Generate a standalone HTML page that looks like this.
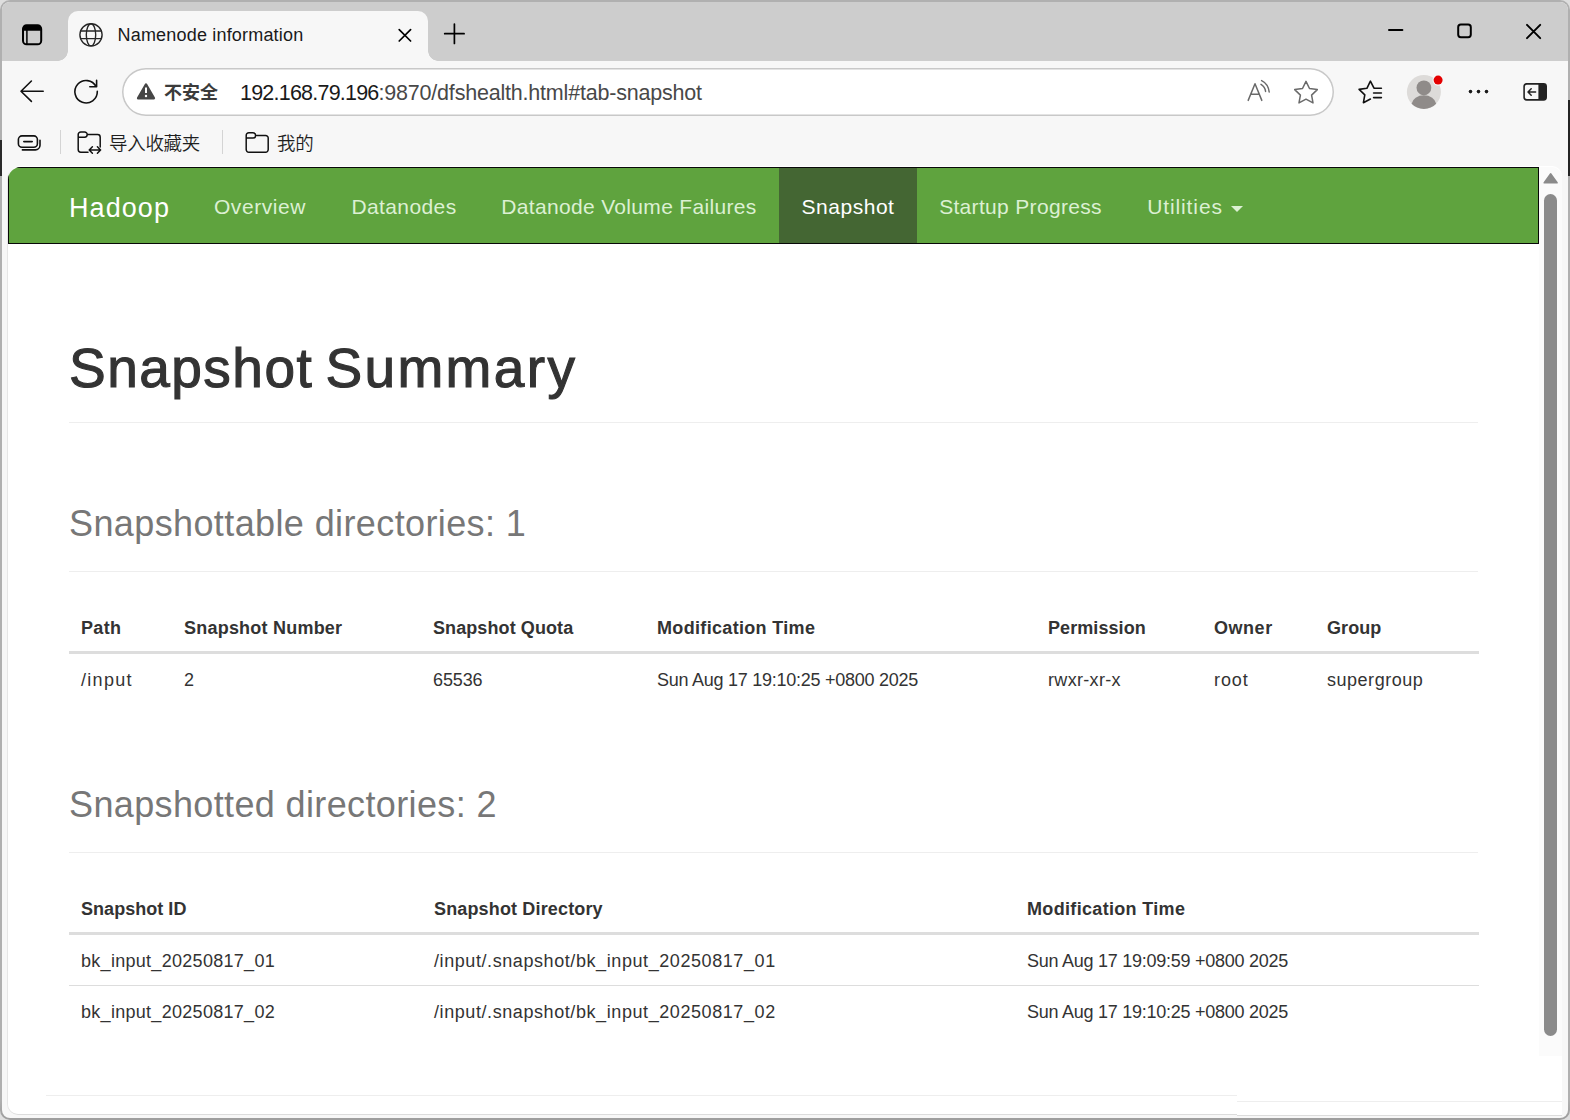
<!DOCTYPE html>
<html lang="zh-CN">
<head>
<meta charset="utf-8">
<title>Namenode information</title>
<style>
*{box-sizing:border-box;margin:0;padding:0}
html,body{width:1570px;height:1120px;overflow:hidden}
body{position:relative;background:#dedede;font-family:"Liberation Sans","Noto Sans CJK SC",sans-serif;color:#1a1a1a}
svg{position:absolute;overflow:visible;display:block}
.abs{position:absolute}

/* ---------- browser window frame ---------- */
#frame{position:absolute;left:0;top:0;width:1570px;height:1120px;border-radius:10px;background:linear-gradient(#b0b0b0,#b0b0b0 1100px,#9e9e9e 1118px)}
#window{position:absolute;left:2px;top:2px;width:1566px;height:1116px;background:#f7f7f7;border-radius:8px;overflow:hidden}
#tabstrip{position:absolute;left:0;top:0;width:1566px;height:59px;background:#cdcdcd}
#tab{position:absolute;left:66px;top:9px;width:360px;height:50px;background:#f7f7f7;border-radius:10px 10px 0 0}
#tab:before,#tab:after{content:"";position:absolute;bottom:0;width:10px;height:10px;background:radial-gradient(circle at 0 0,rgba(247,247,247,0) 9.5px,#f7f7f7 10px)}
#tab:before{left:-10px}
#tab:after{right:-10px;transform:scaleX(-1)}
#tabtitle{position:absolute;left:49.5px;top:13px;font-size:18px;line-height:22px;white-space:nowrap;color:#1a1a1a;letter-spacing:.19px}

/* ---------- toolbar ---------- */
#omnibox{position:absolute;left:120px;top:66px;width:1212px;height:48px;border-radius:24px;background:#fff;box-shadow:inset 0 0 0 1.5px #c8c8c8}
#sec{position:absolute;left:162px;top:78.5px;font-size:18px;line-height:24px;font-weight:700;color:#3b3b3b;white-space:nowrap;font-family:"Liberation Sans","Noto Sans CJK SC",sans-serif}
#url{position:absolute;left:238px;top:77.5px;font-size:21.5px;line-height:26px;white-space:nowrap;color:#484848;letter-spacing:-.2px}
#url b{font-weight:400;color:#1a1a1a;letter-spacing:-.78px}

/* ---------- bookmarks bar ---------- */
.bm{position:absolute;top:129.5px;font-size:18.5px;line-height:24px;white-space:nowrap;color:#1f1f1f;font-weight:350;letter-spacing:-.3px}
.bmsep{position:absolute;top:128px;width:1px;height:24px;background:#d4d4d4}

/* ---------- page ---------- */
#page{position:absolute;left:6px;top:165px;width:1554px;height:947px;background:#fff;border-radius:13px 10px 0 10px;overflow:hidden;box-shadow:0 -1px 0 #fff,-1px 0 0 #e6e6e6,0 1px 0 #dcdcdc}
#view{position:absolute;left:0;top:0;width:1531px;height:947px;overflow:hidden;color:#333;font-size:21px;line-height:30px}
#scroll{position:absolute;left:1531px;top:0;width:23px;height:889px;background:#fbfbfb}
#thumb{position:absolute;left:5px;top:27px;width:13px;height:842px;border-radius:6.5px;background:#8b8b8b}

header.navbar{position:absolute;left:0;top:0;width:1531px;height:77px;background:#5fa33e;border:1px solid #080808}
.brand{position:absolute;left:60px;top:23px;font-size:27px;line-height:30px;color:#fff;white-space:nowrap}
ul.nav{list-style:none;position:absolute;left:182px;top:-1px;height:77px;display:flex}
ul.nav li{height:77px;padding:23.5px 0 0;text-align:center;color:#dcf0d3;white-space:nowrap;font-size:21px;line-height:30px}
ul.nav li.active{background:#446633;color:#fff;border-top:1px solid #080808;border-bottom:1px solid #080808;padding-top:22.5px}
.caret{display:inline-block;width:0;height:0;margin-left:8px;vertical-align:middle;border-top:6px solid #dcf0d3;border-left:6px solid transparent;border-right:6px solid transparent;position:relative;top:2px}
.t{position:relative;top:.09em}

.container{position:absolute;left:38px;top:168px;width:1455px;padding:0 23px}
.page-header{border-bottom:1px solid #eee;height:88px}
h1{font-size:55px;line-height:59px;font-weight:400;color:#333;white-space:nowrap;height:59px}
h1.main .t{-webkit-text-stroke:1.1px #333;top:3.5px;word-spacing:-3.1px}
h1 small.t{font-size:36px;font-weight:400;color:#777;line-height:1;top:4px}
table{border-collapse:separate;border-spacing:0;table-layout:fixed;width:1410px;font-size:18px;line-height:26px}
th,td{text-align:left;padding:0 0 0 12px;white-space:nowrap;overflow:visible;vertical-align:top}
th{font-weight:700;height:52px;border-bottom:3px solid #ddd;padding-top:12px}
td{height:50px;padding-top:12px}
tr+tr td{border-top:1px solid #ddd;height:51px}
th .t,td .t{top:1px}
hr.foot{position:absolute;border:0;height:1px;background:#eee}
#overlay{position:absolute;left:1235px;top:1054px;width:325px;height:60px;background:#fff;border-bottom:1px solid #dcdcdc}
</style>
</head>
<body>
<div id="frame"></div>
<div class="abs" style="left:0;top:140px;width:2px;height:36px;background:#2a2a2a"></div>
<div class="abs" style="left:1568px;top:100px;width:2px;height:76px;background:#242424"></div>
<div id="window">
  <div id="tabstrip">
    <div id="tab">
      <div id="tabtitle">Namenode information</div>
    </div>
  </div>
  <div id="omnibox"></div>
  <svg id="chrome-icons" style="left:-2px;top:-2px" width="1570" height="170" viewBox="0 0 1570 170" fill="none" stroke="#111" stroke-width="1.6" stroke-linecap="round" stroke-linejoin="round">
    <!-- tab actions -->
    <g stroke-width="2" stroke="#000">
      <rect x="23" y="25.3" width="18.2" height="19" rx="3.6"/>
      <path d="M23.4 28.2h17.4" stroke-width="5" stroke-linecap="butt"/>
      <path d="M26.9 30v14" stroke-width="1.5" stroke-linecap="butt"/>
    </g>
    <!-- globe favicon -->
    <g stroke-width="1.4" stroke="#262626">
      <circle cx="91" cy="34.8" r="11.1"/>
      <ellipse cx="91" cy="34.8" rx="4.7" ry="11.1"/>
      <path d="M80.6 31h20.8M80.6 38.6h20.8"/>
    </g>
    <!-- tab close / new tab -->
    <path d="M399.2 29.6l11.4 11.4M410.6 29.6l-11.4 11.4" stroke="#000" stroke-width="1.7"/>
    <path d="M444.7 33.7h19.4M454.4 24v19.4" stroke="#000" stroke-width="1.7"/>
    <!-- window controls -->
    <g stroke="#000" stroke-width="2">
      <path d="M1389 30h13.4"/>
      <rect x="1458.2" y="24.6" width="12.6" height="12.6" rx="2.6"/>
      <path d="M1527 24.9l13.2 13.2M1540.2 24.9L1527 38.1"/>
    </g>
    <!-- back -->
    <path d="M43.2 91.2H21.2M31.4 81L21 91.2l10.4 10.2"/>
    <!-- refresh -->
    <path d="M97.3 91.4A11.2 11.2 0 1 1 96.1 86.7M96.6 80.4V86.8H89.8"/>
    <!-- warning -->
    <path d="M146 84.6l7.8 13.6h-15.6z" fill="#464646" stroke="#464646" stroke-width="2.6"/>
    <path d="M146 87.4v5.6" stroke="#fff" stroke-width="2" stroke-linecap="butt"/>
    <circle cx="146" cy="96" r="1.2" fill="#fff" stroke="none"/>
    <!-- read aloud -->
    <g stroke="#6a6a6a" stroke-width="1.5">
      <path d="M1248.2 100.4l6.8-16.6 6.8 16.6M1250.8 94.2h8.6"/>
      <path d="M1261 84.4c2.6 1.6 4.2 4 4.6 7M1261.6 80.6c4.4 2.2 7 6.2 7.6 11.4"/>
    </g>
    <!-- star -->
    <path d="M1306 81.4l3.5 7.1 7.8 1.1-5.7 5.5 1.4 7.8-7-3.7-7 3.7 1.4-7.8-5.7-5.5 7.8-1.1z" stroke="#6a6a6a" stroke-width="1.5"/>
    <!-- favorites -->
    <path d="M1381.4 88.2h-7.4l-3.6-7-3.5 7.1-7.8 1.1 5.7 5.5-1.4 7.8 7-3.7M1373.6 93h7.8M1373.6 97.6h7.8"/>
    <!-- profile -->
    <circle cx="1423.9" cy="92" r="17" fill="#dddbd9" stroke="none"/>
    <circle cx="1423.9" cy="87.8" r="7.4" fill="#8f8b89" stroke="none"/>
    <path d="M1411.6 103.7a12.4 9.6 0 0 1 24.6 0a17 17 0 0 1-24.6 0z" fill="#8f8b89" stroke="none"/>
    <circle cx="1438.1" cy="80.1" r="5.6" fill="#f7f7f7" stroke="none"/>
    <circle cx="1438.1" cy="80.1" r="4.5" fill="#e40000" stroke="none"/>
    <!-- more -->
    <g fill="#1a1a1a" stroke="none"><circle cx="1470.5" cy="91.6" r="1.8"/><circle cx="1478.5" cy="91.6" r="1.8"/><circle cx="1486.5" cy="91.6" r="1.8"/></g>
    <!-- sidebar -->
    <path d="M1538.4 83.9h5.2a2.6 2.6 0 0 1 2.6 2.6v10.8a2.6 2.6 0 0 1-2.6 2.6h-5.2z" fill="#222" stroke="none"/>
    <rect x="1524.1" y="83.9" width="22.1" height="16" rx="2.6" stroke="#222"/>
    <path d="M1535.6 92h-7M1531.2 88.8l-3.2 3.2 3.2 3.2" stroke="#222" stroke-width="1.5"/>
    <!-- bookmarks bar: tab stack -->
    <rect x="18.4" y="135.9" width="19" height="11.4" rx="3.6"/>
    <path d="M22.4 149.9h13a4.6 4.6 0 0 0 4.6-4.6v-5"/>
    <path d="M23.8 141.6h8.4"/>
    <!-- import folder -->
    <path d="M88 152.2h-7.2a2.6 2.6 0 0 1-2.6-2.6v-15a2.6 2.6 0 0 1 2.6-2.6h3.8a2.6 2.6 0 0 1 2.6 2.6h10.4a2.6 2.6 0 0 1 2.6 2.6v9.8M78.2 137.2h6.4a2.6 2.6 0 0 0 2.6-2.6" stroke-width="1.5"/>
    <path d="M89.2 150h11.4M92.4 146.8l-3.2 3.2 3.2 3.2M97.4 146.8l3.2 3.2-3.2 3.2" stroke-width="1.5"/>
    <!-- folder -->
    <path d="M248.8 132.8h4.2a2.6 2.6 0 0 1 2.6 2.6h10a2.6 2.6 0 0 1 2.6 2.6v11.6a2.6 2.6 0 0 1-2.6 2.6h-16.8a2.6 2.6 0 0 1-2.6-2.6v-14.2a2.6 2.6 0 0 1 2.6-2.6zM246.2 138h6.8a2.6 2.6 0 0 0 2.6-2.6" stroke-width="1.5"/>
  </svg>

  <div id="sec">不安全</div>
  <div id="url"><b>192.168.79.196</b>:9870/dfshealth.html#tab-snapshot</div>
  <div class="bmsep" style="left:58px"></div>
  <div class="bm" style="left:107px">导入收藏夹</div>
  <div class="bmsep" style="left:220px"></div>
  <div class="bm" style="left:275px">我的</div>

  <div id="page">
    <div id="view">
      <header class="navbar">
        <div class="brand"><span class="t" style="letter-spacing:1.08px">Hadoop</span></div>
        <ul class="nav">
          <li style="width:138px"><span class="t" style="letter-spacing:.58px">Overview</span></li>
          <li style="width:150px"><span class="t" style="letter-spacing:.4px">Datanodes</span></li>
          <li style="width:300px"><span class="t" style="letter-spacing:.33px">Datanode Volume Failures</span></li>
          <li class="active" style="width:138px"><span class="t" style="letter-spacing:.53px">Snapshot</span></li>
          <li style="width:207px"><span class="t" style="letter-spacing:.32px">Startup Progress</span></li>
          <li style="width:142px"><span class="t" style="letter-spacing:.89px">Utilities</span><span class="caret"></span></li>
        </ul>
      </header>
      <div class="container">
        <div class="page-header" style="margin-bottom:61px"><h1 class="main"><span class="t"><span style="letter-spacing:1.48px">Snapshot</span> <span style="letter-spacing:2.36px">Summary</span></span></h1></div>
        <div class="page-header" style="margin-bottom:30px"><h1><small class="t" style="letter-spacing:.39px">Snapshottable directories: 1</small></h1></div>
        <table style="margin-bottom:61px">
          <colgroup><col style="width:103px"><col style="width:249px"><col style="width:224px"><col style="width:391px"><col style="width:166px"><col style="width:113px"><col style="width:164px"></colgroup>
          <thead><tr>
            <th><span class="t" style="letter-spacing:.31px">Path</span></th>
            <th><span class="t" style="letter-spacing:.22px">Snapshot Number</span></th>
            <th><span class="t" style="letter-spacing:.09px">Snapshot Quota</span></th>
            <th><span class="t" style="letter-spacing:.33px">Modification Time</span></th>
            <th><span class="t" style="letter-spacing:.08px">Permission</span></th>
            <th><span class="t" style="letter-spacing:.53px">Owner</span></th>
            <th><span class="t" style="letter-spacing:.07px">Group</span></th>
          </tr></thead>
          <tbody><tr>
            <td><span class="t" style="letter-spacing:1.3px">/input</span></td>
            <td><span class="t" style="letter-spacing:-.12px">2</span></td>
            <td><span class="t" style="letter-spacing:-.12px">65536</span></td>
            <td><span class="t" style="letter-spacing:-.26px">Sun Aug 17 19:10:25 +0800 2025</span></td>
            <td><span class="t" style="letter-spacing:.32px">rwxr-xr-x</span></td>
            <td><span class="t" style="letter-spacing:.92px">root</span></td>
            <td><span class="t" style="letter-spacing:.52px">supergroup</span></td>
          </tr></tbody>
        </table>
        <div class="page-header" style="margin-bottom:30px"><h1><small class="t" style="letter-spacing:.37px">Snapshotted directories: 2</small></h1></div>
        <table>
          <colgroup><col style="width:353px"><col style="width:593px"><col style="width:464px"></colgroup>
          <thead><tr>
            <th><span class="t" style="letter-spacing:.04px">Snapshot ID</span></th>
            <th><span class="t" style="letter-spacing:.15px">Snapshot Directory</span></th>
            <th><span class="t" style="letter-spacing:.33px">Modification Time</span></th>
          </tr></thead>
          <tbody>
            <tr>
              <td><span class="t" style="letter-spacing:.29px">bk_input_20250817_01</span></td>
              <td><span class="t" style="letter-spacing:.58px">/input/.snapshot/bk_input_20250817_01</span></td>
              <td><span class="t" style="letter-spacing:-.26px">Sun Aug 17 19:09:59 +0800 2025</span></td>
            </tr>
            <tr>
              <td><span class="t" style="letter-spacing:.29px">bk_input_20250817_02</span></td>
              <td><span class="t" style="letter-spacing:.58px">/input/.snapshot/bk_input_20250817_02</span></td>
              <td><span class="t" style="letter-spacing:-.26px">Sun Aug 17 19:10:25 +0800 2025</span></td>
            </tr>
          </tbody>
        </table>
      </div>
      <hr class="foot" style="left:38px;top:928px;width:1192px">
    </div>
    <div id="scroll"><svg style="left:4px;top:6.1px" width="16" height="12" viewBox="0 0 16 12"><path d="M7.65 1l6.3 8.7h-12.6z" fill="#8b8b8b" stroke="#8b8b8b" stroke-width="1.8" stroke-linejoin="round"/></svg><div id="thumb"></div></div>
  </div>
  <div id="overlay"><hr class="foot" style="left:0;top:45px;width:325px"></div>
</div>
</body>
</html>
